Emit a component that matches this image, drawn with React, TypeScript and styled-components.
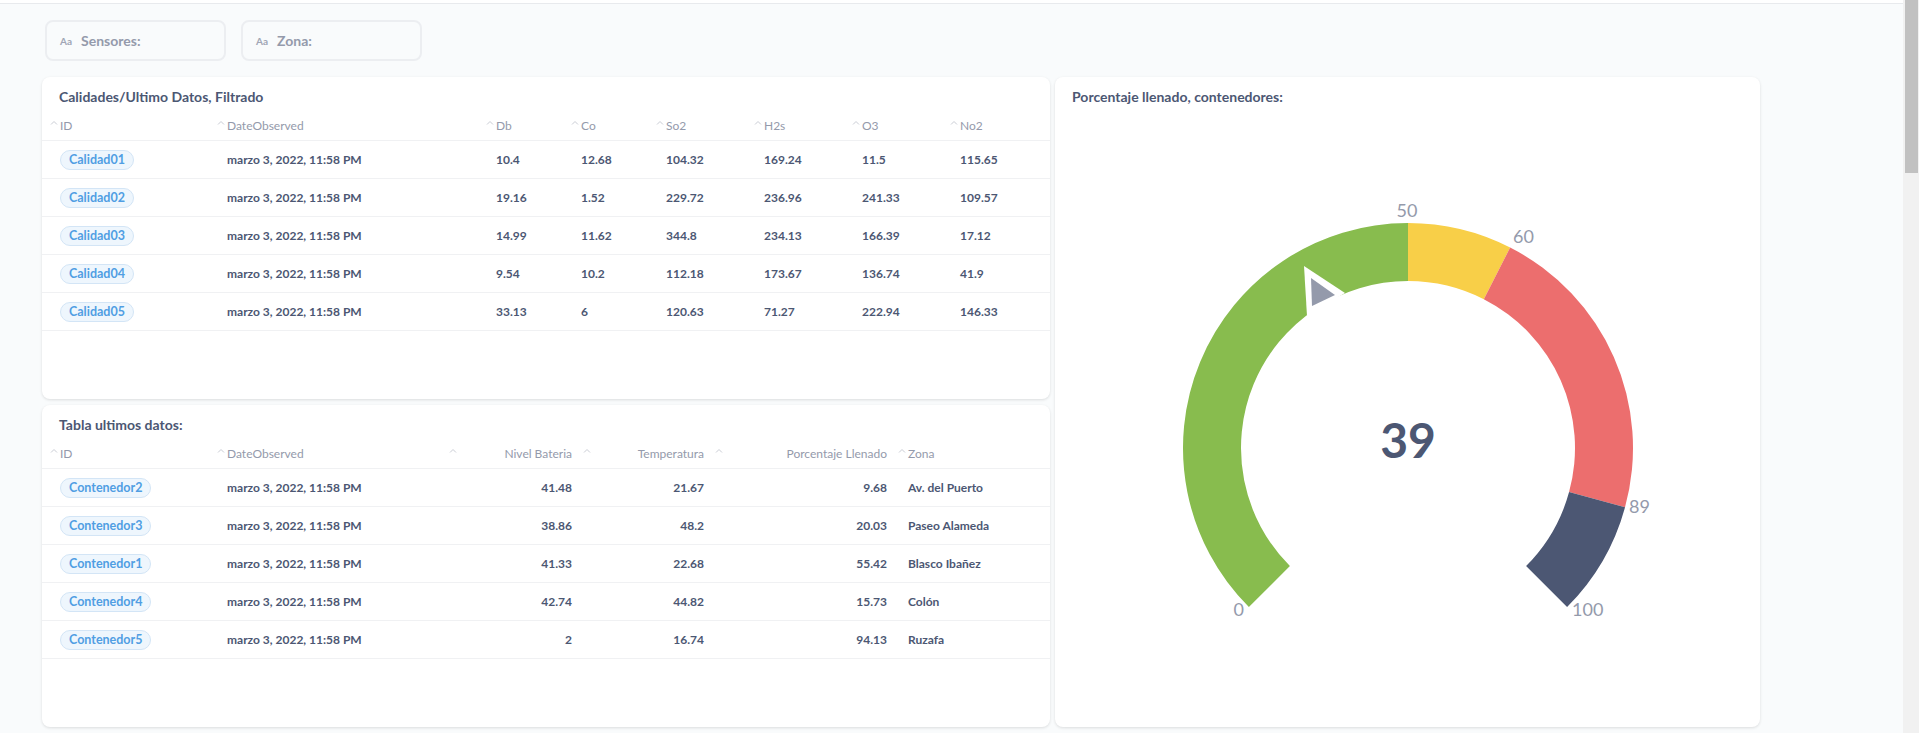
import React from "react"
import styled, { createGlobalStyle } from "styled-components"

const GlobalStyle = createGlobalStyle`
    html, body {
        margin: 0;
        padding: 0;
        overflow: hidden;
    }
    body {
        background: #f9fbfc;
        font-family: Lato, "Liberation Sans", sans-serif;
        color: #4c5773;
    }
`

type Col = { label: string, width: number, align?: "right" }

const calidadCols: Col[] = [
    { label: "ID", width: 167 },
    { label: "DateObserved", width: 269 },
    { label: "Db", width: 85 },
    { label: "Co", width: 85 },
    { label: "So2", width: 98 },
    { label: "H2s", width: 98 },
    { label: "O3", width: 98 },
    { label: "No2", width: 108 },
]

const calidades = [
    ["Calidad01", "10.4", "12.68", "104.32", "169.24", "11.5", "115.65"],
    ["Calidad02", "19.16", "1.52", "229.72", "236.96", "241.33", "109.57"],
    ["Calidad03", "14.99", "11.62", "344.8", "234.13", "166.39", "17.12"],
    ["Calidad04", "9.54", "10.2", "112.18", "173.67", "136.74", "41.9"],
    ["Calidad05", "33.13", "6", "120.63", "71.27", "222.94", "146.33"],
]

const contCols: Col[] = [
    { label: "ID", width: 167 },
    { label: "DateObserved", width: 232 },
    { label: "Nivel Bateria", width: 134, align: "right" },
    { label: "Temperatura", width: 132, align: "right" },
    { label: "Porcentaje Llenado", width: 183, align: "right" },
    { label: "Zona", width: 160 },
]

const contenedores = [
    ["Contenedor2", "41.48", "21.67", "9.68", "Av. del Puerto"],
    ["Contenedor3", "38.86", "48.2", "20.03", "Paseo Alameda"],
    ["Contenedor1", "41.33", "22.68", "55.42", "Blasco Ibañez"],
    ["Contenedor4", "42.74", "44.82", "15.73", "Colón"],
    ["Contenedor5", "2", "16.74", "94.13", "Ruzafa"],
]

const DATE = "marzo 3, 2022, 11:58 PM"

const Caret = () => (
    <CaretIcon width="8" height="5" viewBox="0 0 8 5">
        <polyline points="1,4.5 4,1.5 7,4.5" fill="none" stroke="#c9ccd4" strokeWidth="1" />
    </CaretIcon>
)

const DataTable = ({ cols, rows }: { cols: Col[], rows: string[][] }) => {
    const template = cols.map(c => `${c.width}px`).join(" ")
    return (
        <div>
            <HeaderRow $cols={template}>
                {cols.map(c => (
                    <HeaderCell key={c.label}>
                        <Caret />
                        <HeaderLabel $align={c.align}>{c.label}</HeaderLabel>
                    </HeaderCell>
                ))}
            </HeaderRow>
            {rows.map(r => {
                const values = [r[0], DATE, ...r.slice(1)]
                return (
                    <Row key={r[0]} $cols={template}>
                        {values.map((v, i) => (
                            <Cell key={i} $align={cols[i].align}>
                                {i === 0 ? <Pill>{v}</Pill> : v}
                            </Cell>
                        ))}
                    </Row>
                )
            })}
        </div>
    )
}

// gauge geometry, svg coords (svg sits under the card title)
const CX = 353
const CY = 337
const R_OUT = 225
const R_IN = 167

const point = (v: number, r: number) => {
    const a = ((225 - 270 * v / 100) * Math.PI) / 180
    return `${(CX + r * Math.cos(a)).toFixed(2)},${(CY - r * Math.sin(a)).toFixed(2)}`
}

const segment = (from: number, to: number) => {
    const large = (to - from) * 2.7 > 180 ? 1 : 0
    return `M${point(from, R_OUT)} A${R_OUT},${R_OUT} 0 ${large} 1 ${point(to, R_OUT)} L${point(to, R_IN)} A${R_IN},${R_IN} 0 ${large} 0 ${point(from, R_IN)} Z`
}

const segments = [
    { from: 0, to: 50, color: "#88bc4e" },
    { from: 50, to: 60, color: "#f8cf48" },
    { from: 60, to: 89, color: "#ec6e6e" },
    { from: 89, to: 100, color: "#4c5773" },
]

const Gauge = () => (
    <GaugeSvg width="705" height="614" viewBox="0 0 705 614">
        {segments.map(s => <path key={s.from} d={segment(s.from, s.to)} fill={s.color} />)}
        <polygon points="249,155 252,205 290,182" fill="#ffffff" />
        <polygon points="256,167 257,195 280,184" fill="#949aab" />
        <GaugeLabel x="352" y="106" textAnchor="middle">50</GaugeLabel>
        <GaugeLabel x="458" y="132">60</GaugeLabel>
        <GaugeLabel x="574" y="402">89</GaugeLabel>
        <GaugeLabel x="517" y="505">100</GaugeLabel>
        <GaugeLabel x="189" y="505" textAnchor="end">0</GaugeLabel>
        <GaugeValue x="353" y="347" textAnchor="middle">39</GaugeValue>
    </GaugeSvg>
)

const App = () => {
    return (
        <Shell>
            <GlobalStyle />
            <Page>
                <TopBar />
                <Filters>
                    <FilterBox><FilterIcon>Aa</FilterIcon>Sensores:</FilterBox>
                    <FilterBox><FilterIcon>Aa</FilterIcon>Zona:</FilterBox>
                </Filters>
                <Grid>
                    <Card>
                        <CardTitle>Calidades/Ultimo Datos, Filtrado</CardTitle>
                        <DataTable cols={calidadCols} rows={calidades} />
                    </Card>
                    <GaugeCard>
                        <CardTitle>Porcentaje llenado, contenedores:</CardTitle>
                        <Gauge />
                    </GaugeCard>
                    <Card>
                        <CardTitle>Tabla ultimos datos:</CardTitle>
                        <DataTable cols={contCols} rows={contenedores} />
                    </Card>
                </Grid>
            </Page>
            <ScrollTrack>
                <ScrollThumb />
            </ScrollTrack>
        </Shell>
    )
}

const Shell = styled.div`
    display: flex;
    height: 100vh;
`

const Page = styled.div`
    flex: 1;
    min-width: 0;
    overflow: hidden;
`

const ScrollTrack = styled.div`
    flex: none;
    width: 16px;
    background: #f1f1f1;
`

const ScrollThumb = styled.div`
    height: 173px;
    margin: 0 1px 0 2px;
    background: #c1c1c1;
`

const TopBar = styled.div`
    height: 3px;
    background: #ffffff;
    border-bottom: 1px solid #e8eaed;
`

const Filters = styled.div`
    display: flex;
    gap: 15px;
    padding: 16px 0 0 45px;
`

const FilterBox = styled.div`
    box-sizing: border-box;
    width: 181px;
    height: 41px;
    border: 2px solid #eceef1;
    border-radius: 8px;
    display: flex;
    align-items: center;
    padding-left: 13px;
    font-size: 14px;
    font-weight: 700;
    color: #949aab;
`

const FilterIcon = styled.span`
    font-size: 10px;
    font-weight: 700;
    margin-right: 9px;
    color: #a0a6b5;
`

const Grid = styled.div`
    display: grid;
    grid-template-columns: 1008px 705px;
    grid-template-rows: 322px 322px;
    column-gap: 5px;
    row-gap: 6px;
    padding: 16px 0 0 42px;
`

const Card = styled.div`
    background: #ffffff;
    border-radius: 8px;
    box-shadow: 0 1px 3px rgba(0, 0, 0, 0.12);
    overflow: hidden;
`

const GaugeCard = styled(Card)`
    grid-column: 2;
    grid-row: 1 / span 2;
    display: flex;
    flex-direction: column;
`

const CardTitle = styled.div`
    box-sizing: border-box;
    height: 34px;
    padding: 11px 17px 0;
    font-size: 14px;
    line-height: 18px;
    font-weight: 700;
    color: #4c5773;
`

const HeaderRow = styled.div<{ $cols: string }>`
    display: grid;
    grid-template-columns: ${p => p.$cols};
    height: 30px;
    box-sizing: border-box;
    border-bottom: 1px solid #f0f1f3;
`

const HeaderCell = styled.div`
    display: flex;
    align-items: center;
    padding-left: 8px;
    font-size: 12px;
    color: #949aab;
`

const CaretIcon = styled.svg`
    flex: none;
    margin: 0 2px 6px 0;
`

const HeaderLabel = styled.span<{ $align?: string }>`
    margin-left: ${p => p.$align === "right" ? "auto" : "0"};
    padding-right: ${p => p.$align === "right" ? "3px" : "0"};
    white-space: nowrap;
`

const Row = styled.div<{ $cols: string }>`
    display: grid;
    grid-template-columns: ${p => p.$cols};
    height: 38px;
    box-sizing: border-box;
    border-bottom: 1px solid #f0f1f3;
`

const Cell = styled.div<{ $align?: string }>`
    display: flex;
    align-items: center;
    justify-content: ${p => p.$align === "right" ? "flex-end" : "flex-start"};
    padding: ${p => p.$align === "right" ? "0 3px 0 0" : "0 0 0 18px"};
    font-size: 12px;
    font-weight: 700;
    color: #4c5773;
    white-space: nowrap;
`

const Pill = styled.span`
    display: inline-flex;
    align-items: center;
    height: 20px;
    box-sizing: border-box;
    padding: 0 8px;
    border: 1px solid #d3e5f6;
    border-radius: 99px;
    background: #eef6fd;
    color: #509ee3;
    font-size: 12.5px;
    font-weight: 700;
`

const GaugeSvg = styled.svg`
    display: block;
    flex: none;
`

const GaugeLabel = styled.text`
    font-family: Lato, "Liberation Sans", sans-serif;
    font-size: 18px;
    fill: #949aab;
`

const GaugeValue = styled.text`
    font-family: Lato, "Liberation Sans", sans-serif;
    font-size: 48px;
    font-weight: 700;
    fill: #4c5773;
`

export default App
